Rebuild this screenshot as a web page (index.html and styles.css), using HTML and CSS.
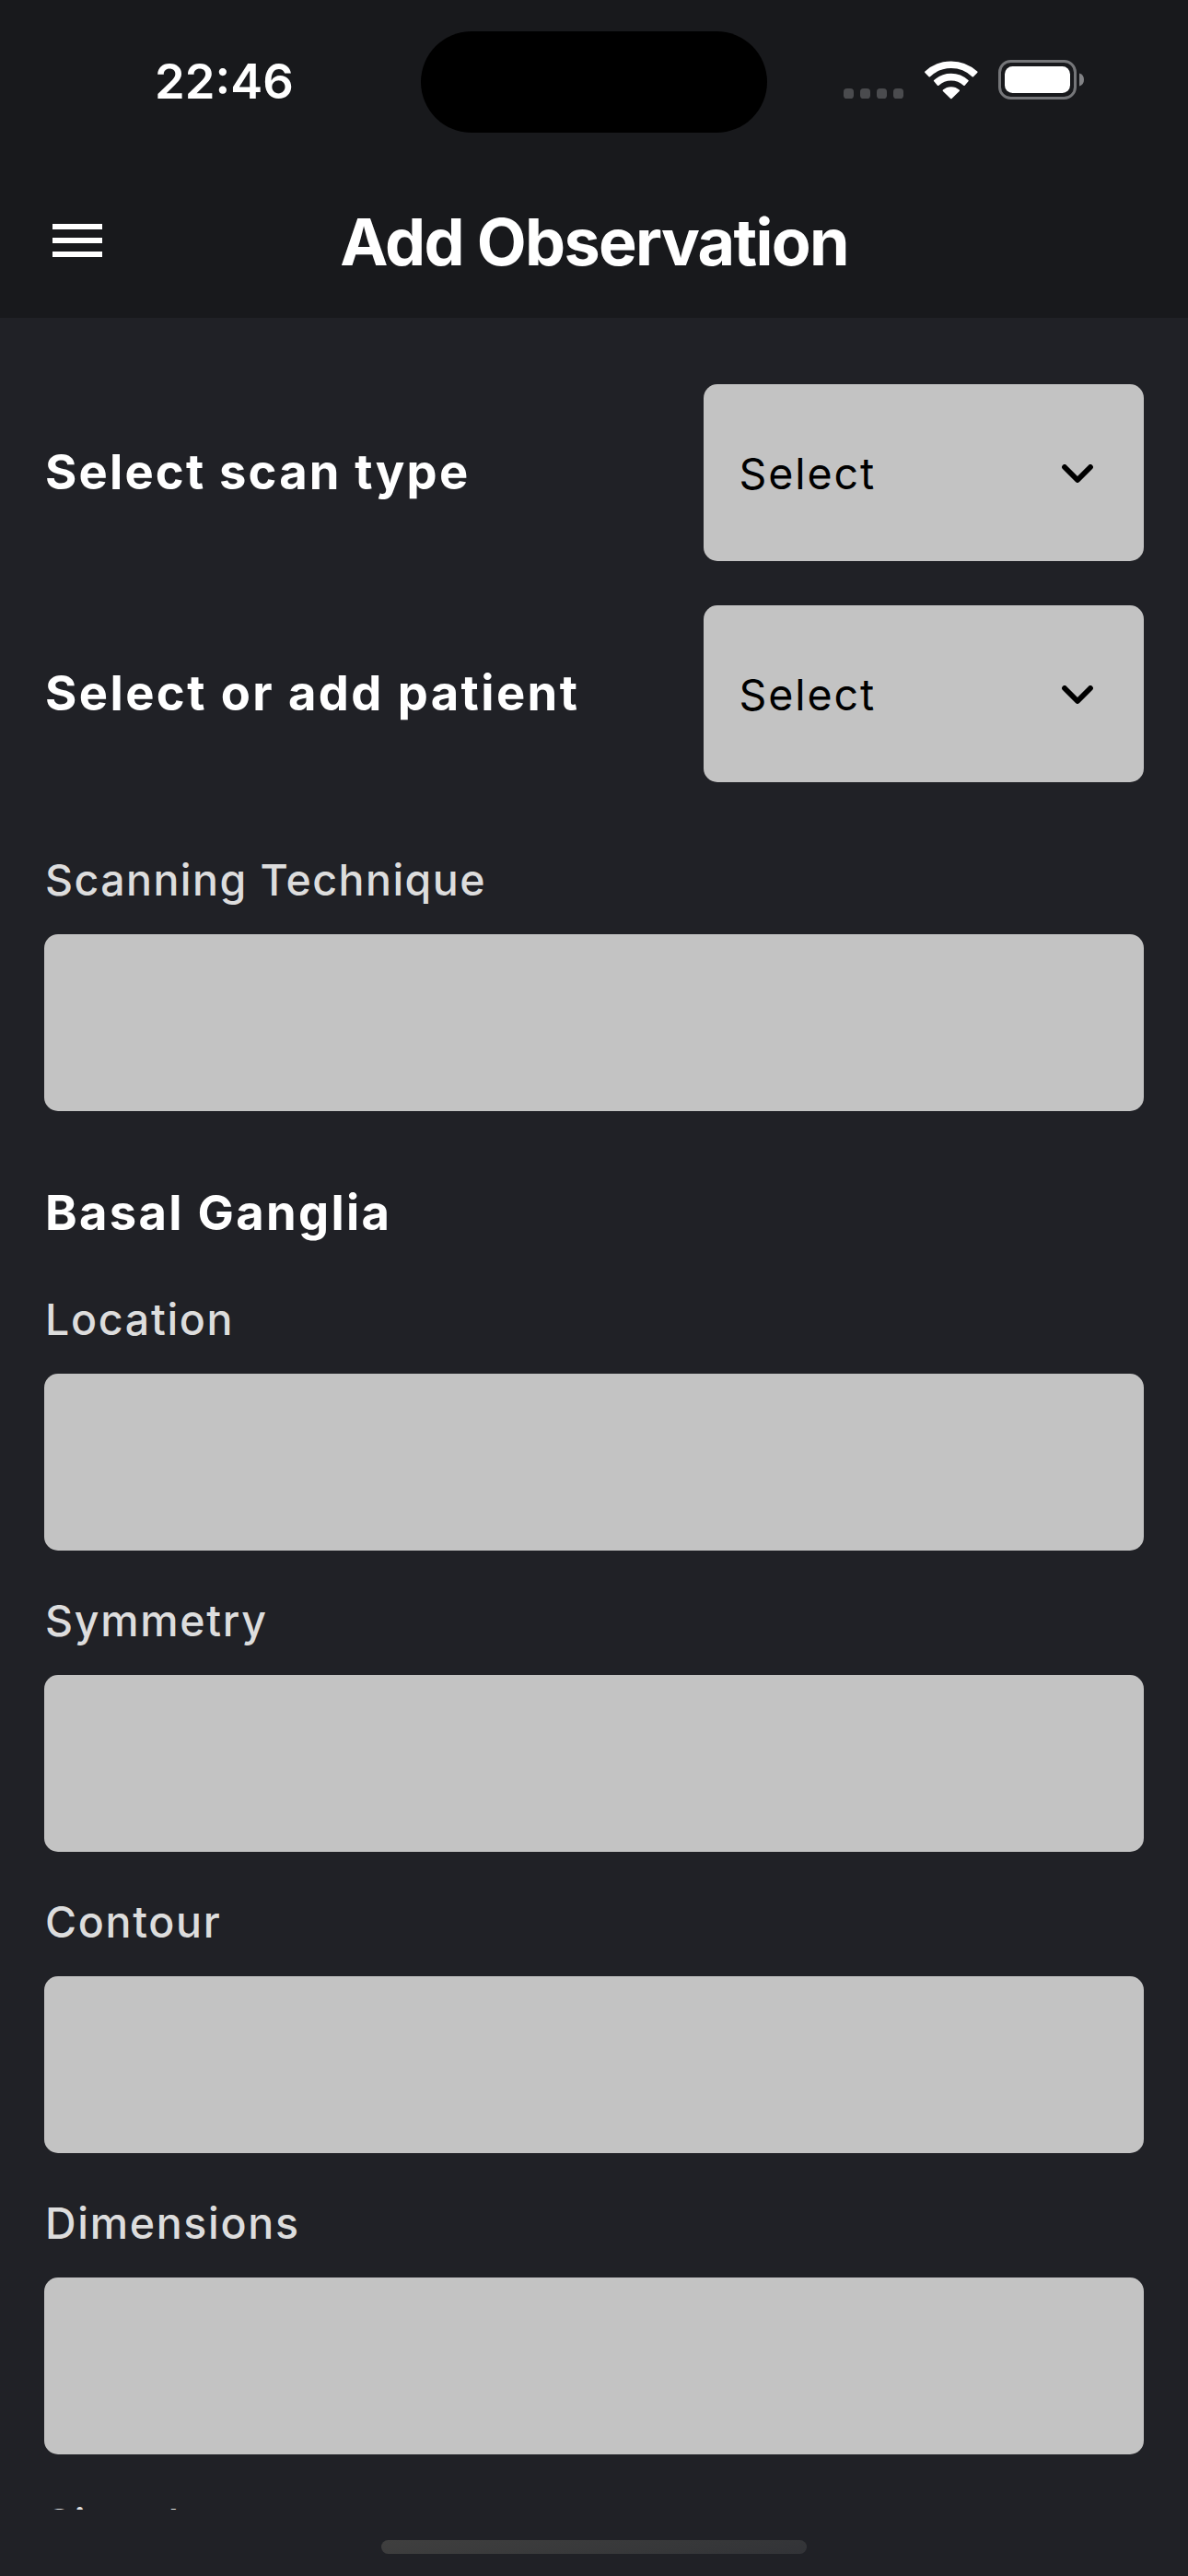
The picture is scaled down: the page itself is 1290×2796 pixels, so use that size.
FILE: index.html
```html
<!DOCTYPE html>
<html lang="en">
<head>
<meta charset="utf-8">
<title>Add Observation</title>
<link rel="stylesheet" href="styles.css">
</head>
<body>
<div class="screen">
  <header class="header">
    <div class="status">
      <span class="time">22:46</span>
      <span class="island"></span>
      <div class="indicators">
        <svg class="cell" width="65" height="11" viewBox="0 0 65 11"><g fill="#4a4b4e"><rect width="11" height="11" rx="3.6"/><rect x="18" width="11" height="11" rx="3.6"/><rect x="36" width="11" height="11" rx="3.6"/><rect x="54" width="11" height="11" rx="3.6"/></g></svg>
        <svg class="wifi" width="58" height="43" viewBox="0 0 58 43"><g fill="#fff" stroke="#fff" stroke-width="2" stroke-linejoin="round"><path d="M1.1 13.3A40.6 40.6 0 0 1 56.5 13.3L52.3 17.5A34 34 0 0 0 5.3 17.5Z"/><path d="M10.9 22.7A26.3 26.3 0 0 1 46.7 22.7L42.9 27A20.6 20.6 0 0 0 14.7 27Z"/><path d="M20.6 33.3A12.2 12.2 0 0 1 37 33.3L28.8 41.2Z"/></g></svg>
        <svg class="battery" width="93" height="43" viewBox="0 0 93 43"><rect x="1.5" y="1.5" width="82" height="40" rx="12" fill="none" stroke="#757679" stroke-width="3"/><rect x="7" y="7" width="71" height="29" rx="8.5" fill="#fff"/><path d="M88 14.5C91.3 15.6 93 18 93 21.5S91.3 27.400 88 28.500Z" fill="#828386"/></svg>
      </div>
    </div>
    <nav class="nav">
      <svg class="menu" width="72" height="72" viewBox="0 0 24 24" fill="#fff"><path d="M3 18h18v-2H3v2zm0-5h18v-2H3v2zm0-7v2h18V6H3z"/></svg>
      <h1 class="title">Add Observation</h1>
    </nav>
  </header>
  <main class="form">
    <div class="pickers">
      <div class="picker">
        <span class="heading picker-label scan">Select scan type</span>
        <div class="select"><span>Select</span><svg width="34" height="20" viewBox="0 0 34 20"><path d="M3 3L17 17L31 3" fill="none" stroke="#000" stroke-width="5.8" stroke-linecap="round" stroke-linejoin="round"/></svg></div>
      </div>
      <div class="picker">
        <span class="heading picker-label">Select or add patient</span>
        <div class="select"><span>Select</span><svg width="34" height="20" viewBox="0 0 34 20"><path d="M3 3L17 17L31 3" fill="none" stroke="#000" stroke-width="5.8" stroke-linecap="round" stroke-linejoin="round"/></svg></div>
      </div>
    </div>
    <div class="field technique"><span class="label">Scanning Technique</span><div class="box"></div></div>
    <h2 class="heading section">Basal Ganglia</h2>
    <div class="fields">
      <div class="field"><span class="label">Location</span><div class="box"></div></div>
      <div class="field"><span class="label">Symmetry</span><div class="box"></div></div>
      <div class="field"><span class="label">Contour</span><div class="box"></div></div>
      <div class="field"><span class="label">Dimensions</span><div class="box"></div></div>
      <div class="field"><span class="label">Signal</span><div class="box"></div></div>
    </div>
  </main>
  <footer class="footer"><span class="home"></span></footer>
</div>
</body>
</html>
```
FILE: styles.css
```css
* { box-sizing: border-box; }
body {
  margin: 0;
  background: #202126;
  color: #fff;
  font-family: Inter, "Liberation Sans", sans-serif;
}
svg { display: block; flex: none; }
.screen {
  display: flex;
  flex-direction: column;
  width: 1290px;
  height: 2796px;
  overflow: hidden;
}
.header { flex: none; height: 345px; background: #18191c; }
.status {
  display: grid;
  grid-template-columns: 457px 376px 457px;
  align-items: start;
  height: 177px;
}
.time {
  padding: 56px 0 0 168px;
  font-size: 52.5px;
  font-weight: 600;
  line-height: 64px;
}
.island { height: 110px; margin-top: 34px; border-radius: 55px; background: #000; }
.indicators {
  display: flex;
  align-items: flex-end;
  padding: 65px 0 0 83px;
}
.cell { margin-bottom: 1px; }
.wifi { margin-left: 23px; }
.battery { margin-left: 22px; }
.nav {
  display: grid;
  grid-template-columns: 72px 1fr 72px;
  align-items: center;
  height: 168px;
  padding: 0 48px;
}
.title {
  margin: 0;
  padding-top: 3px;
  font-size: 70px;
  font-weight: 700;
  line-height: 85px;
  letter-spacing: -1.69px;
  text-align: center;
  white-space: nowrap;
}
.form { flex: none; height: 2379px; padding: 72px 48px 0; overflow: hidden; }
.pickers { display: flex; flex-direction: column; gap: 48px; }
.picker { display: flex; align-items: center; justify-content: space-between; }
.heading {
  margin: 0;
  padding-left: 1px;
  font-size: 52.5px;
  font-weight: 700;
  line-height: 64px;
  letter-spacing: 2.3px;
}
.picker-label { padding-bottom: 2px; letter-spacing: 2.42px; }
.scan { letter-spacing: 2.18px; }
.select {
  display: flex;
  align-items: center;
  justify-content: space-between;
  width: 40%;
  height: 192px;
  padding: 2px 55px 0 38px;
  border-radius: 15px;
  background: #c3c3c3;
  color: #000;
  font-size: 46.5px;
  line-height: 56px;
  letter-spacing: 1.96px;
}
.field { display: flex; flex-direction: column; gap: 31px; }
.label {
  padding-left: 1px;
  color: #ddd;
  font-size: 46.5px;
  font-weight: 500;
  line-height: 56px;
  letter-spacing: 1.7px;
}
.box { height: 192px; border-radius: 15px; background: #c3c3c3; }
.technique { margin-top: 78px; }
.technique .label { letter-spacing: 1.43px; }
.section { margin-top: 78px; }
.fields { display: flex; flex-direction: column; gap: 48px; margin-top: 56px; }
.footer { display: flex; justify-content: center; height: 72px; padding-top: 33px; }
.home {
  width: 462px;
  height: 15px;
  border-radius: 7.5px;
  background: linear-gradient(170deg, #3f3f3f, #363739 70%, #323337);
}
```
